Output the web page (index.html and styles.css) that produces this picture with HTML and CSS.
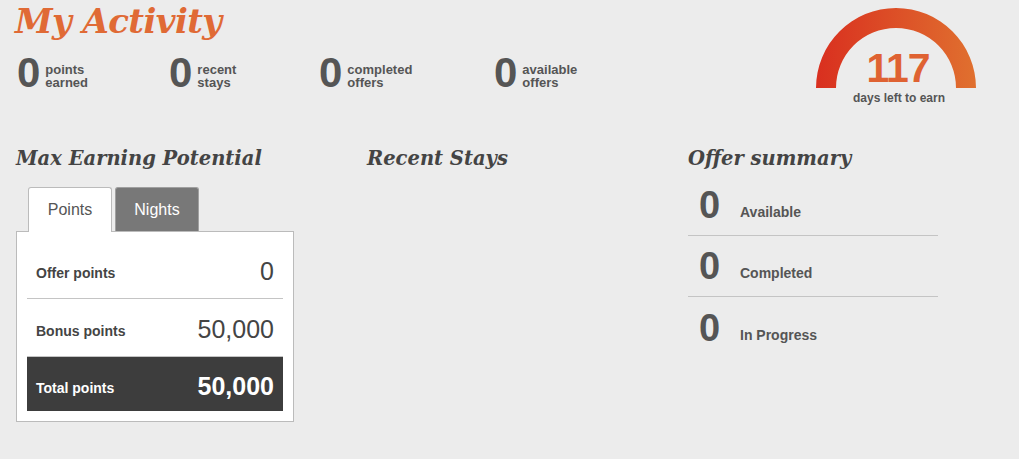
FILE: index.html
```html
<!DOCTYPE html>
<html>
<head>
	<meta charset="utf-8">
	<title>My Activity</title>
	<link rel="stylesheet" href="styles.css">
</head>
<body>
<div class="top">
	<div class="summary">
		<h1 class="title">My Activity</h1>
		<div class="stats">
			<div class="stat s1"><span class="num">0</span><span class="lbl">points<br>earned</span></div>
			<div class="stat s2"><span class="num">0</span><span class="lbl">recent<br>stays</span></div>
			<div class="stat s3"><span class="num">0</span><span class="lbl">completed<br>offers</span></div>
			<div class="stat s4"><span class="num">0</span><span class="lbl">available<br>offers</span></div>
		</div>
	</div>
	<div class="gauge">
		<svg width="160" height="80" viewBox="0 0 160 80">
			<defs>
				<linearGradient id="arc" x1="0" y1="0" x2="1" y2="0">
					<stop offset="0" stop-color="#d92f1f"/>
					<stop offset="1" stop-color="#e0702f"/>
				</linearGradient>
			</defs>
			<path d="M0 80 A80 80 0 0 1 160 80 L140 80 A60 60 0 0 0 20 80 Z" fill="url(#arc)"/>
		</svg>
		<div class="days">117</div>
		<div class="days-lbl">days left to earn</div>
	</div>
</div>

<div class="columns">
	<div class="col">
		<h2>Max Earning Potential</h2>
		<div class="tabs">
			<div class="tab active">Points</div>
			<div class="tab">Nights</div>
		</div>
		<div class="panel">
			<div class="row"><span class="row-lbl">Offer points</span><span class="row-val">0</span></div>
			<div class="row"><span class="row-lbl">Bonus points</span><span class="row-val">50,000</span></div>
			<div class="row total"><span class="row-lbl">Total points</span><span class="row-val">50,000</span></div>
		</div>
	</div>
	<div class="col">
		<h2>Recent Stays</h2>
	</div>
	<div class="col">
		<h2>Offer summary</h2>
		<div class="offers">
			<div class="offer"><span class="num">0</span><span class="offer-lbl">Available</span></div>
			<div class="offer"><span class="num">0</span><span class="offer-lbl">Completed</span></div>
			<div class="offer"><span class="num">0</span><span class="offer-lbl">In Progress</span></div>
		</div>
	</div>
</div>
</body>
</html>
```

FILE: styles.css
```css
body{
	margin: 0;
	background: #ececec;
	font-family: "Liberation Sans", Arial, sans-serif;
	color: #555;
}
.top{
	display: flex;
	justify-content: space-between;
	padding: 0 43px 0 15px;
	height: 110px;
}
.title{
	margin: 0;
	font-family: "DejaVu Serif", Georgia, serif;
	font-style: italic;
	font-weight: bold;
	font-size: 34px;
	line-height: 42px;
	letter-spacing: -0.6px;
	color: #e06a35;
}
.stats{
	display: flex;
	margin-top: 11px;
}
.stat{
	display: flex;
	align-items: center;
}
.s1{ width: 152px; margin-left: 2px; }
.s2{ width: 150px; }
.s3{ width: 175px; }
.num{
	font-size: 42px;
	font-weight: bold;
	line-height: 40px;
	color: #555;
}
.stat .lbl{
	margin-left: 5px;
	font-size: 13px;
	font-weight: bold;
	line-height: 13px;
	color: #555;
	padding-top: 6px;
}
.gauge{
	position: relative;
	width: 160px;
	padding-top: 8px;
	text-align: center;
}
.gauge svg{
	display: block;
}
.days{
	position: absolute;
	left: 0;
	right: 0;
	top: 46px;
	padding-left: 4px;
	font-size: 41px;
	line-height: 44px;
	font-weight: bold;
	color: #df6232;
	letter-spacing: -1px;
}
.days-lbl{
	margin-top: 3px;
	padding-left: 6px;
	font-size: 12px;
	font-weight: bold;
	color: #555;
}
.columns{
	display: grid;
	grid-template-columns: 351px 321px 300px;
	padding-left: 16px;
}
h2{
	margin: 36px 0 0;
	font-family: "DejaVu Serif", Georgia, serif;
	font-style: italic;
	font-weight: bold;
	font-size: 19.5px;
	line-height: 26px;
	color: #444;
}
.tabs{
	display: flex;
	gap: 3px;
	margin: 15px 0 0 12px;
}
.tab{
	width: 84px;
	height: 44px;
	line-height: 44px;
	text-align: center;
	font-size: 16px;
	color: #fff;
	background: #787878;
	border: 1px solid #a0a0a0;
	border-bottom: none;
	border-radius: 3px 3px 0 0;
	box-sizing: border-box;
}
.tab.active{
	background: #fff;
	color: #555;
	border-color: #bbb;
	height: 45px;
	margin-bottom: -1px;
	position: relative;
}
.panel{
	width: 278px;
	box-sizing: border-box;
	background: #fff;
	border: 1px solid #bbb;
	padding: 0 10px 10px;
}
.row{
	display: flex;
	justify-content: space-between;
	align-items: flex-end;
	height: 67px;
	padding: 0 9px 17px;
	box-sizing: border-box;
	border-bottom: 1px solid #c4c4c4;
}
.row + .row{
	height: 58px;
}
.row-lbl{
	font-size: 14px;
	font-weight: bold;
	color: #444;
}
.row-val{
	font-size: 25px;
	color: #444;
	line-height: 26px;
	margin-bottom: -3px;
}
.row.total{
	height: 54px;
	background: #3d3d3d;
	border-bottom: none;
	padding-bottom: 15px;
}
.total .row-lbl,
.total .row-val{
	color: #fff;
}
.total .row-val{
	font-weight: bold;
}
.offers{
	width: 250px;
	margin-top: 14px;
}
.offer{
	display: flex;
	align-items: flex-end;
	height: 61px;
	box-sizing: border-box;
	padding: 0 0 14px 11px;
	border-bottom: 1px solid #c4c4c4;
}
.offer:first-child{
	height: 50px;
}
.offer:last-child{
	border-bottom: none;
}
.offer .num{
	font-size: 38px;
	line-height: 32px;
	width: 41px;
}
.offer-lbl{
	font-size: 14px;
	font-weight: bold;
	color: #555;
	margin-bottom: 1px;
}
```
